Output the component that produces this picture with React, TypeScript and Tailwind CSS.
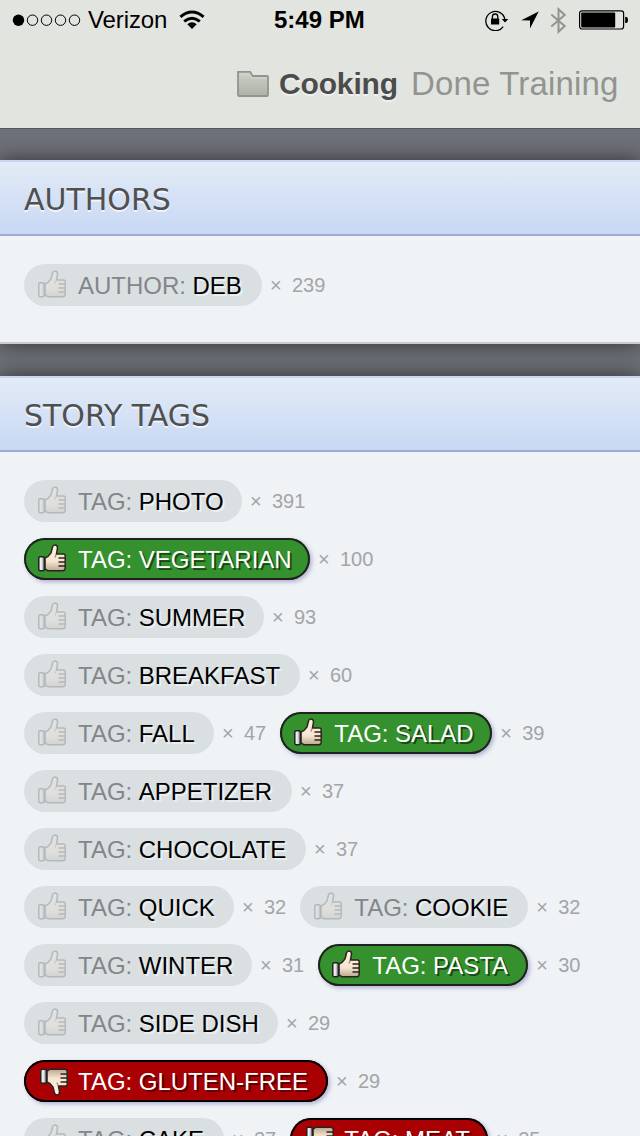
import type { ReactNode } from "react";

type Mood = "none" | "like" | "dislike";
type Chip = { kind?: string; value: string; count: number; mood?: Mood; width: string };

const authors: Chip[][] = [[{ kind: "AUTHOR:", value: "DEB", count: 239, width: "w-[238px]" }]];

const tags: Chip[][] = [
  [{ value: "PHOTO", count: 391, width: "w-[218px]" }],
  [{ value: "VEGETARIAN", count: 100, mood: "like", width: "w-[286px]" }],
  [{ value: "SUMMER", count: 93, width: "w-[240px]" }],
  [{ value: "BREAKFAST", count: 60, width: "w-[276px]" }],
  [
    { value: "FALL", count: 47, width: "w-[190px]" },
    { value: "SALAD", count: 39, mood: "like", width: "w-[212px]" },
  ],
  [{ value: "APPETIZER", count: 37, width: "w-[268px]" }],
  [{ value: "CHOCOLATE", count: 37, width: "w-[282px]" }],
  [
    { value: "QUICK", count: 32, width: "w-[210px]" },
    { value: "COOKIE", count: 32, width: "w-[228px]" },
  ],
  [
    { value: "WINTER", count: 31, width: "w-[228px]" },
    { value: "PASTA", count: 30, mood: "like", width: "w-[210px]" },
  ],
  [{ value: "SIDE DISH", count: 29, width: "w-[254px]" }],
  [{ value: "GLUTEN-FREE", count: 29, mood: "dislike", width: "w-[304px]" }],
  [
    { value: "CAKE", count: 27, width: "w-[200px]" },
    { value: "MEAT", count: 25, mood: "dislike", width: "w-[198px]" },
  ],
];

function Thumb({ mood }: { mood: Mood }) {
  const place =
    mood === "dislike"
      ? "mt-2 ml-4 mr-[10px] -scale-y-100"
      : mood === "like"
        ? "mt-[6px] ml-[14px] mr-3"
        : "mt-[6px] ml-[14px] mr-3 opacity-20";
  return (
    <svg className={`h-7 w-7 shrink-0 ${place}`} viewBox="0 0 28 28">
      <defs>
        <linearGradient id="skin" x1="0" y1="0" x2="0" y2="1">
          <stop offset="0" stopColor="#fff3e2" />
          <stop offset="0.65" stopColor="#f6e4cf" />
          <stop offset="1" stopColor="#b9a791" />
        </linearGradient>
        <linearGradient id="cuff" x1="0" y1="0" x2="1" y2="0">
          <stop offset="0" stopColor="#ffffff" />
          <stop offset="0.5" stopColor="#e4e4e8" />
          <stop offset="1" stopColor="#77777b" />
        </linearGradient>
      </defs>
      <path
        d="M7 14 L10 12.5 L13 9 L14.5 3 Q15 1 17 1 Q19.5 1 19.5 4 L18.5 10 L25.5 10 Q27.2 10 27.2 11.8 L27.2 24.5 Q27 26.5 25 26.8 L10 26.8 L7 25 Z"
        fill="url(#skin)"
        stroke="#2b241e"
        strokeWidth="1.5"
      />
      <path d="M20.5 14 H27 M20.5 18 H27 M20.5 22 H27" stroke="#2b241e" strokeWidth="1.6" />
      <path d="M18 10.8 L17 13.4" stroke="#9d8b76" strokeWidth="1.3" />
      <rect x="0.8" y="12.8" width="5.6" height="14" rx="1.5" fill="url(#cuff)" stroke="#222" strokeWidth="1.5" />
    </svg>
  );
}

function Tag({ kind = "TAG:", value, count, mood = "none", width }: Chip) {
  const skin =
    mood === "like"
      ? "bg-[#34912d] text-white shadow-[2px_2px_4px_rgba(60,50,140,0.35)]"
      : mood === "dislike"
        ? "bg-[#a80003] text-white shadow-[2px_2px_4px_rgba(60,50,140,0.35)]"
        : "bg-[#dadfe2] text-black";
  const ring =
    mood === "like"
      ? "inset-ring-2 inset-ring-[#202020]"
      : mood === "dislike"
        ? "inset-ring-2 inset-ring-black"
        : "";
  return (
    <div className="flex h-[42px]">
      <div className={`flex h-[42px] shrink-0 rounded-full text-[24px] leading-[43px] whitespace-nowrap ${width} ${skin} ${ring}`}>
        <Thumb mood={mood} />
        <span className={mood === "none" ? "text-[#838688]" : ""}>{kind}</span>
        <span
          className={`ml-[6.5px] ${
            mood === "none"
              ? "[text-shadow:2px_2px_0_rgba(255,255,255,0.5)]"
              : "[text-shadow:2px_2px_0_rgba(0,0,0,0.5)]"
          }`}
        >
          {value}
        </span>
      </div>
      <div className="flex pl-2 pr-[14px] text-[20px] leading-[43px] text-[#a3a5a7]">
        <span className="w-[22px]">×</span>
        <span>{count}</span>
      </div>
    </div>
  );
}

function Section({ title, rows, children }: { title: string; rows: Chip[][]; children?: ReactNode }) {
  return (
    <section className="mt-8 border-b-2 border-[#c9cad2] bg-[#eff3f6] shadow-[0_0_20px_#303030]">
      <h2 className="h-[76px] border-t-2 border-b-2 border-t-[#c9d7f4] border-b-[#a2a9d2] bg-linear-to-b from-[#e2ebf6] to-[#c8d8f4] pl-6 font-['DejaVu_Sans',sans-serif] text-[30px] leading-[75px] text-[#505050] [text-shadow:0_2px_0_rgba(255,255,255,0.7)]">
        {title}
      </h2>
      <div className="flex flex-col gap-4 px-6 pt-7 pb-9">
        {rows.map((row) => (
          <div className="flex" key={row[0].value}>
            {row.map((chip) => (
              <Tag key={chip.value} {...chip} />
            ))}
          </div>
        ))}
      </div>
      {children}
    </section>
  );
}

function StatusBar() {
  return (
    <div className="grid h-10 grid-cols-[274px_1fr_auto] items-center text-black">
      <div className="flex items-center pl-3">
        <svg className="h-[14px] w-[70px]" viewBox="0 0 70 14">
          <circle cx="6.5" cy="7.2" r="5.7" />
          {[20.5, 34.5, 48.5, 62.5].map((x) => (
            <circle key={x} cx={x} cy="7.2" r="5.2" fill="none" stroke="black" strokeWidth="1" />
          ))}
        </svg>
        <span className="ml-[6px] text-[24px] leading-10 tracking-[-0.1px]">Verizon</span>
        <svg className="ml-3 h-[20px] w-[26px]" viewBox="0 0 26 20">
          <path d="M1.4 6.9 Q13 -2.8 24.6 6.9" fill="none" stroke="black" strokeWidth="2.9" />
          <path d="M5.2 11.4 Q13 5 20.8 11.4" fill="none" stroke="black" strokeWidth="2.9" />
          <path d="M8.3 14.3 Q13 10.3 17.7 14.3 L13 19Z" />
        </svg>
      </div>
      <div className="text-[24px] font-bold leading-10">5:49 PM</div>
      <div className="flex items-center pr-[11px]">
        <svg className="h-[22px] w-[24px]" viewBox="0 0 24 22">
          <path d="M18.2 17.7 A9.6 9.6 0 1 1 19.8 10" fill="none" stroke="black" strokeWidth="1.3" />
          <path d="M16.8 10 H23.3 L20 13.5Z" />
          <rect x="6" y="9.6" width="8.2" height="6" rx="0.6" />
          <path d="M7.4 10 V7.7 Q7.4 5 10.1 5 Q12.8 5 12.8 7.7 V10" fill="none" stroke="black" strokeWidth="1.3" />
        </svg>
        <svg className="ml-[12px] h-[18px] w-[18px]" viewBox="0 0 18 18">
          <path d="M17.7 0.5 L0.3 9.3 L9 9.4 L9 17.6 Z" />
        </svg>
        <svg className="ml-[11px] h-[27px] w-[17px]" viewBox="0 0 17 27">
          <path d="M1.3 7.5 L14.7 19 L8.5 24.8 V2.2 L14.7 8 L1.3 19.5" fill="none" stroke="#92948f" strokeWidth="2" />
        </svg>
        <svg className="ml-3 h-[20px] w-[50px]" viewBox="0 0 50 20">
          <rect x="0.6" y="0.8" width="44" height="18.2" rx="2.5" fill="none" stroke="black" strokeWidth="1.2" />
          <rect x="2.2" y="2.4" width="34" height="15" rx="1" />
          <path d="M46.2 6.7 Q49 6.7 49 9.9 Q49 13.1 46.2 13.1Z" />
        </svg>
      </div>
    </div>
  );
}

function Folder() {
  return (
    <svg className="h-[28px] w-[34px]" viewBox="0 0 34 28">
      <defs>
        <linearGradient id="folder" x1="0" y1="0" x2="0" y2="1">
          <stop offset="0" stopColor="#cdd0c7" />
          <stop offset="1" stopColor="#aeb1a7" />
        </linearGradient>
      </defs>
      <path
        d="M2 1.8 H14.2 L16.6 6 H31 Q32 6 32 7 V25 Q32 26 31 26 H3 Q2 26 2 25Z"
        fill="url(#folder)"
        stroke="#92958c"
        strokeWidth="1.8"
      />
      <path d="M3 4.5 H13.5 L16 8 H31" fill="none" stroke="#d0d3cb" strokeWidth="1.4" />
    </svg>
  );
}

export default function App() {
  return (
    <main className="h-[1136px] w-[640px] overflow-hidden bg-[#6e7179] font-['Liberation_Sans',Arial,sans-serif]">
      <header className="h-[129px] border-b border-[#55575b] bg-[#e2e4df]">
        <StatusBar />
        <div className="flex h-[88px] items-center justify-end pr-[19px] whitespace-nowrap">
          <Folder />
          <span className="ml-[9px] w-[132px] text-[30px] font-bold leading-[88px] tracking-[-0.15px] text-[#4c4c4c] [text-shadow:0_2px_0_rgba(255,255,255,0.5)]">
            Cooking
          </span>
          <span className="w-[210px] text-[33px] leading-[88px] tracking-[0.15px] text-[#92948f]">Done Training</span>
        </div>
      </header>
      <div className="-mt-px">
        <Section title="AUTHORS" rows={authors} />
        <Section title="STORY TAGS" rows={tags} />
      </div>
    </main>
  );
}
